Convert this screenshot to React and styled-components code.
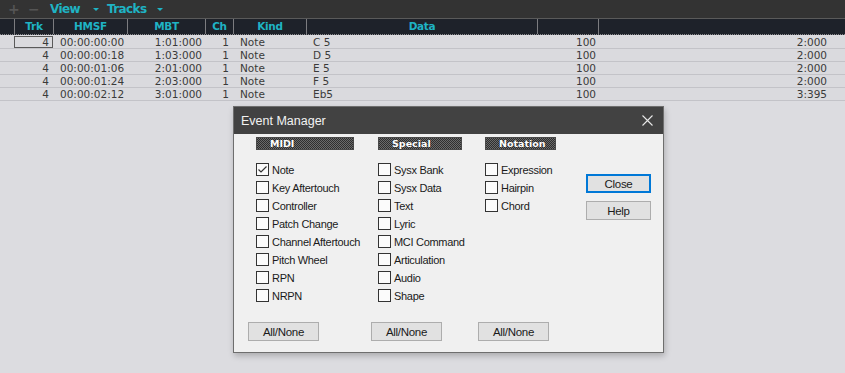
import React from "react";
import styled, { createGlobalStyle } from "styled-components";

const Global = createGlobalStyle`
  html, body { margin: 0; padding: 0; }
  body {
    width: 845px; height: 373px; overflow: hidden;
    background: #dcdce0;
    font-family: "DejaVu Sans", sans-serif;
  }
`;

const Page = styled.div`
  position: relative;
  width: 845px;
  height: 373px;
  background: #dcdce0;
`;

const Toolbar = styled.div`
  height: 18px;
  background: #333333;
  display: flex;
  align-items: center;
  padding-left: 8px;
  border-bottom: 1px solid #5a5a5a;
`;

const ToolIcon = styled.span`
  color: #555;
  font-family: "DejaVu Sans", sans-serif;
  font-size: 14px;
  font-weight: bold;
  width: 20px;
  line-height: 18px;
`;

const Menu = styled.span`
  color: #1fb3c4;
  font-family: "DejaVu Sans", sans-serif;
  font-weight: bold;
  font-size: 12px;
  letter-spacing: -0.6px;
  margin-left: ${(p) => p.$ml || 0}px;
  line-height: 18px;
`;

const Caret = styled.span`
  width: 0; height: 0;
  border-left: 3px solid transparent;
  border-right: 3px solid transparent;
  border-top: 3px solid #1fb3c4;
  margin-left: ${(p) => p.$ml}px;
  margin-top: 1px;
`;

const cols = "14px 39px 74px 78px 28px 73px 231px 61px 1fr";

const HeaderRow = styled.div`
  display: grid;
  grid-template-columns: ${cols};
  height: 15px;
  background: #1e222a;
  border-bottom: 1px dotted #8a8a8e;
`;

const HeadCell = styled.div`
  color: #1fb3c4;
  font-weight: bold;
  font-size: 10.5px;
  letter-spacing: -0.3px;
  text-align: center;
  line-height: 15px;
  border-left: ${(p) => (p.$first ? "none" : "1px solid #7c7c80")};
`;

const Row = styled.div`
  display: grid;
  grid-template-columns: ${cols};
  height: 12px;
  background: #dadade;
  border-bottom: 1px solid #c3c3c8;
  &:first-child { margin-top: 1px; }
`;

const Cell = styled.div`
  font-size: 10.5px;
  color: #3a3a3a;
  line-height: 12px;
  white-space: nowrap;
  text-align: ${(p) => p.$align || "left"};
  padding: ${(p) => (p.$align === "right" ? `0 ${p.$pad}px 0 0` : `0 0 0 ${p.$pad}px`)};
  box-sizing: border-box;
  outline: ${(p) => (p.$focus ? "1px solid #5a5a5a" : "none")};
  outline-offset: -1px;
`;

const Dialog = styled.div`
  position: absolute;
  left: 233px;
  top: 106px;
  width: 431px;
  height: 247px;
  box-sizing: border-box;
  background: #f0f0f0;
  border: 1px solid #6e6e6e;
  box-shadow: 1px 3px 6px rgba(0, 0, 0, 0.22);
  display: flex;
  flex-direction: column;
  font-family: "Liberation Sans", Arial, sans-serif;
`;

const TitleBar = styled.div`
  height: 27px;
  background: #424242;
  display: flex;
  align-items: center;
  justify-content: space-between;
  padding: 0 10px 0 7px;
  color: #f2f2f2;
  font-size: 12.5px;
`;

const Body = styled.div`
  flex: 1;
  display: flex;
  padding: 3px 0 0 22px;
`;

const Col = styled.div`
  width: ${(p) => p.$w}px;
  display: flex;
  flex-direction: column;
`;

const Section = styled.div`
  width: ${(p) => p.$w}px;
  height: 13px;
  box-sizing: border-box;
  background: repeating-conic-gradient(#2e2e2e 0 25%, #6a6a6a 0 50%) 0 0 / 2px 2px;
  border: 1px solid #4a4a4a;
  color: #fff;
  font-family: "DejaVu Sans", sans-serif;
  font-weight: bold;
  font-size: 9.5px;
  line-height: 11px;
  padding-left: 13px;
  margin-bottom: 13px;
  text-shadow: 0 0 1px #222;
`;

const CheckRow = styled.label`
  display: flex;
  align-items: center;
  height: 18px;
  font-size: 11px;
  color: #1a1a1a;
  letter-spacing: -0.3px;
`;

const Box = styled.span`
  width: 13px;
  height: 13px;
  box-sizing: border-box;
  border: 1px solid #333;
  background: #fbfbfb;
  margin-right: 3px;
  margin-top: -5px;
  display: inline-flex;
  align-items: center;
  justify-content: center;
  flex-shrink: 0;
`;

const Label = styled.span`
  margin-top: -5px;
`;

const Btn = styled.button`
  width: ${(p) => p.$w || 65}px;
  height: 19px;
  box-sizing: border-box;
  background: #e1e1e1;
  border: 1px solid ${(p) => (p.$focus ? "#0078d7" : "#adadad")};
  box-shadow: ${(p) => (p.$focus ? "inset 0 0 0 1px #0078d7" : "none")};
  font-family: "Liberation Sans", Arial, sans-serif;
  font-size: 11.5px;
  letter-spacing: -0.3px;
  color: #1a1a1a;
  padding: 0;
  margin-bottom: ${(p) => p.$mb || 0}px;
`;

const ButtonCol = styled.div`
  display: flex;
  flex-direction: column;
  padding-top: 37px;
`;

const Footer = styled.div`
  display: grid;
  grid-template-columns: 123px 107px 71px;
  padding: 0 0 11px 14px;
`;

const Check = ({ label, checked }) => (
  <CheckRow>
    <Box>
      {checked && (
        <svg width="11" height="11" viewBox="0 0 11 11">
          <polyline points="1.5,5.5 4,8 9.5,2.5" fill="none" stroke="#333" strokeWidth="1.2" />
        </svg>
      )}
    </Box>
    <Label>{label}</Label>
  </CheckRow>
);

const rows = [
  ["00:00:00:00", "1:01:000", "C 5", "2:000"],
  ["00:00:00:18", "1:03:000", "D 5", "2:000"],
  ["00:00:01:06", "2:01:000", "E 5", "2:000"],
  ["00:00:01:24", "2:03:000", "F 5", "2:000"],
  ["00:00:02:12", "3:01:000", "Eb5", "3:395"],
];

const midi = ["Note", "Key Aftertouch", "Controller", "Patch Change", "Channel Aftertouch", "Pitch Wheel", "RPN", "NRPN"];
const special = ["Sysx Bank", "Sysx Data", "Text", "Lyric", "MCI Command", "Articulation", "Audio", "Shape"];
const notation = ["Expression", "Hairpin", "Chord"];

export default function App() {
  return (
    <Page>
      <Global />
      <Toolbar>
        <ToolIcon>+</ToolIcon>
        <ToolIcon>−</ToolIcon>
        <Menu $ml={2}>View</Menu>
        <Caret $ml={13} />
        <Menu $ml={8}>Tracks</Menu>
        <Caret $ml={10} />
      </Toolbar>
      <HeaderRow>
        <HeadCell $first />
        <HeadCell>Trk</HeadCell>
        <HeadCell>HMSF</HeadCell>
        <HeadCell>MBT</HeadCell>
        <HeadCell>Ch</HeadCell>
        <HeadCell>Kind</HeadCell>
        <HeadCell>Data</HeadCell>
        <HeadCell />
        <HeadCell />
      </HeaderRow>
      <div>
        {rows.map((r, i) => (
          <Row key={i}>
            <Cell />
            <Cell $align="right" $pad={4} $focus={i === 0}>4</Cell>
            <Cell $pad={7}>{r[0]}</Cell>
            <Cell $align="right" $pad={3}>{r[1]}</Cell>
            <Cell $align="right" $pad={4}>1</Cell>
            <Cell $pad={7}>Note</Cell>
            <Cell $pad={7}>{r[2]}</Cell>
            <Cell $align="right" $pad={2}>100</Cell>
            <Cell $align="right" $pad={18}>{r[3]}</Cell>
          </Row>
        ))}
      </div>
      <Dialog>
        <TitleBar>
          <span>Event Manager</span>
          <svg width="11" height="11" viewBox="0 0 11 11">
            <path d="M0.5 0.5 L10.5 10.5 M10.5 0.5 L0.5 10.5" stroke="#e8e8e8" strokeWidth="1.1" />
          </svg>
        </TitleBar>
        <Body>
          <Col $w={122}>
            <Section $w={98}>MIDI</Section>
            {midi.map((m, i) => (
              <Check key={m} label={m} checked={i === 0} />
            ))}
          </Col>
          <Col $w={107}>
            <Section $w={84}>Special</Section>
            {special.map((m) => (
              <Check key={m} label={m} />
            ))}
          </Col>
          <Col $w={101}>
            <Section $w={71}>Notation</Section>
            {notation.map((m) => (
              <Check key={m} label={m} />
            ))}
          </Col>
          <ButtonCol>
            <Btn $focus $mb={8}>Close</Btn>
            <Btn>Help</Btn>
          </ButtonCol>
        </Body>
        <Footer>
          <Btn $w={71}>All/None</Btn>
          <Btn $w={71}>All/None</Btn>
          <Btn $w={71}>All/None</Btn>
        </Footer>
      </Dialog>
    </Page>
  );
}
